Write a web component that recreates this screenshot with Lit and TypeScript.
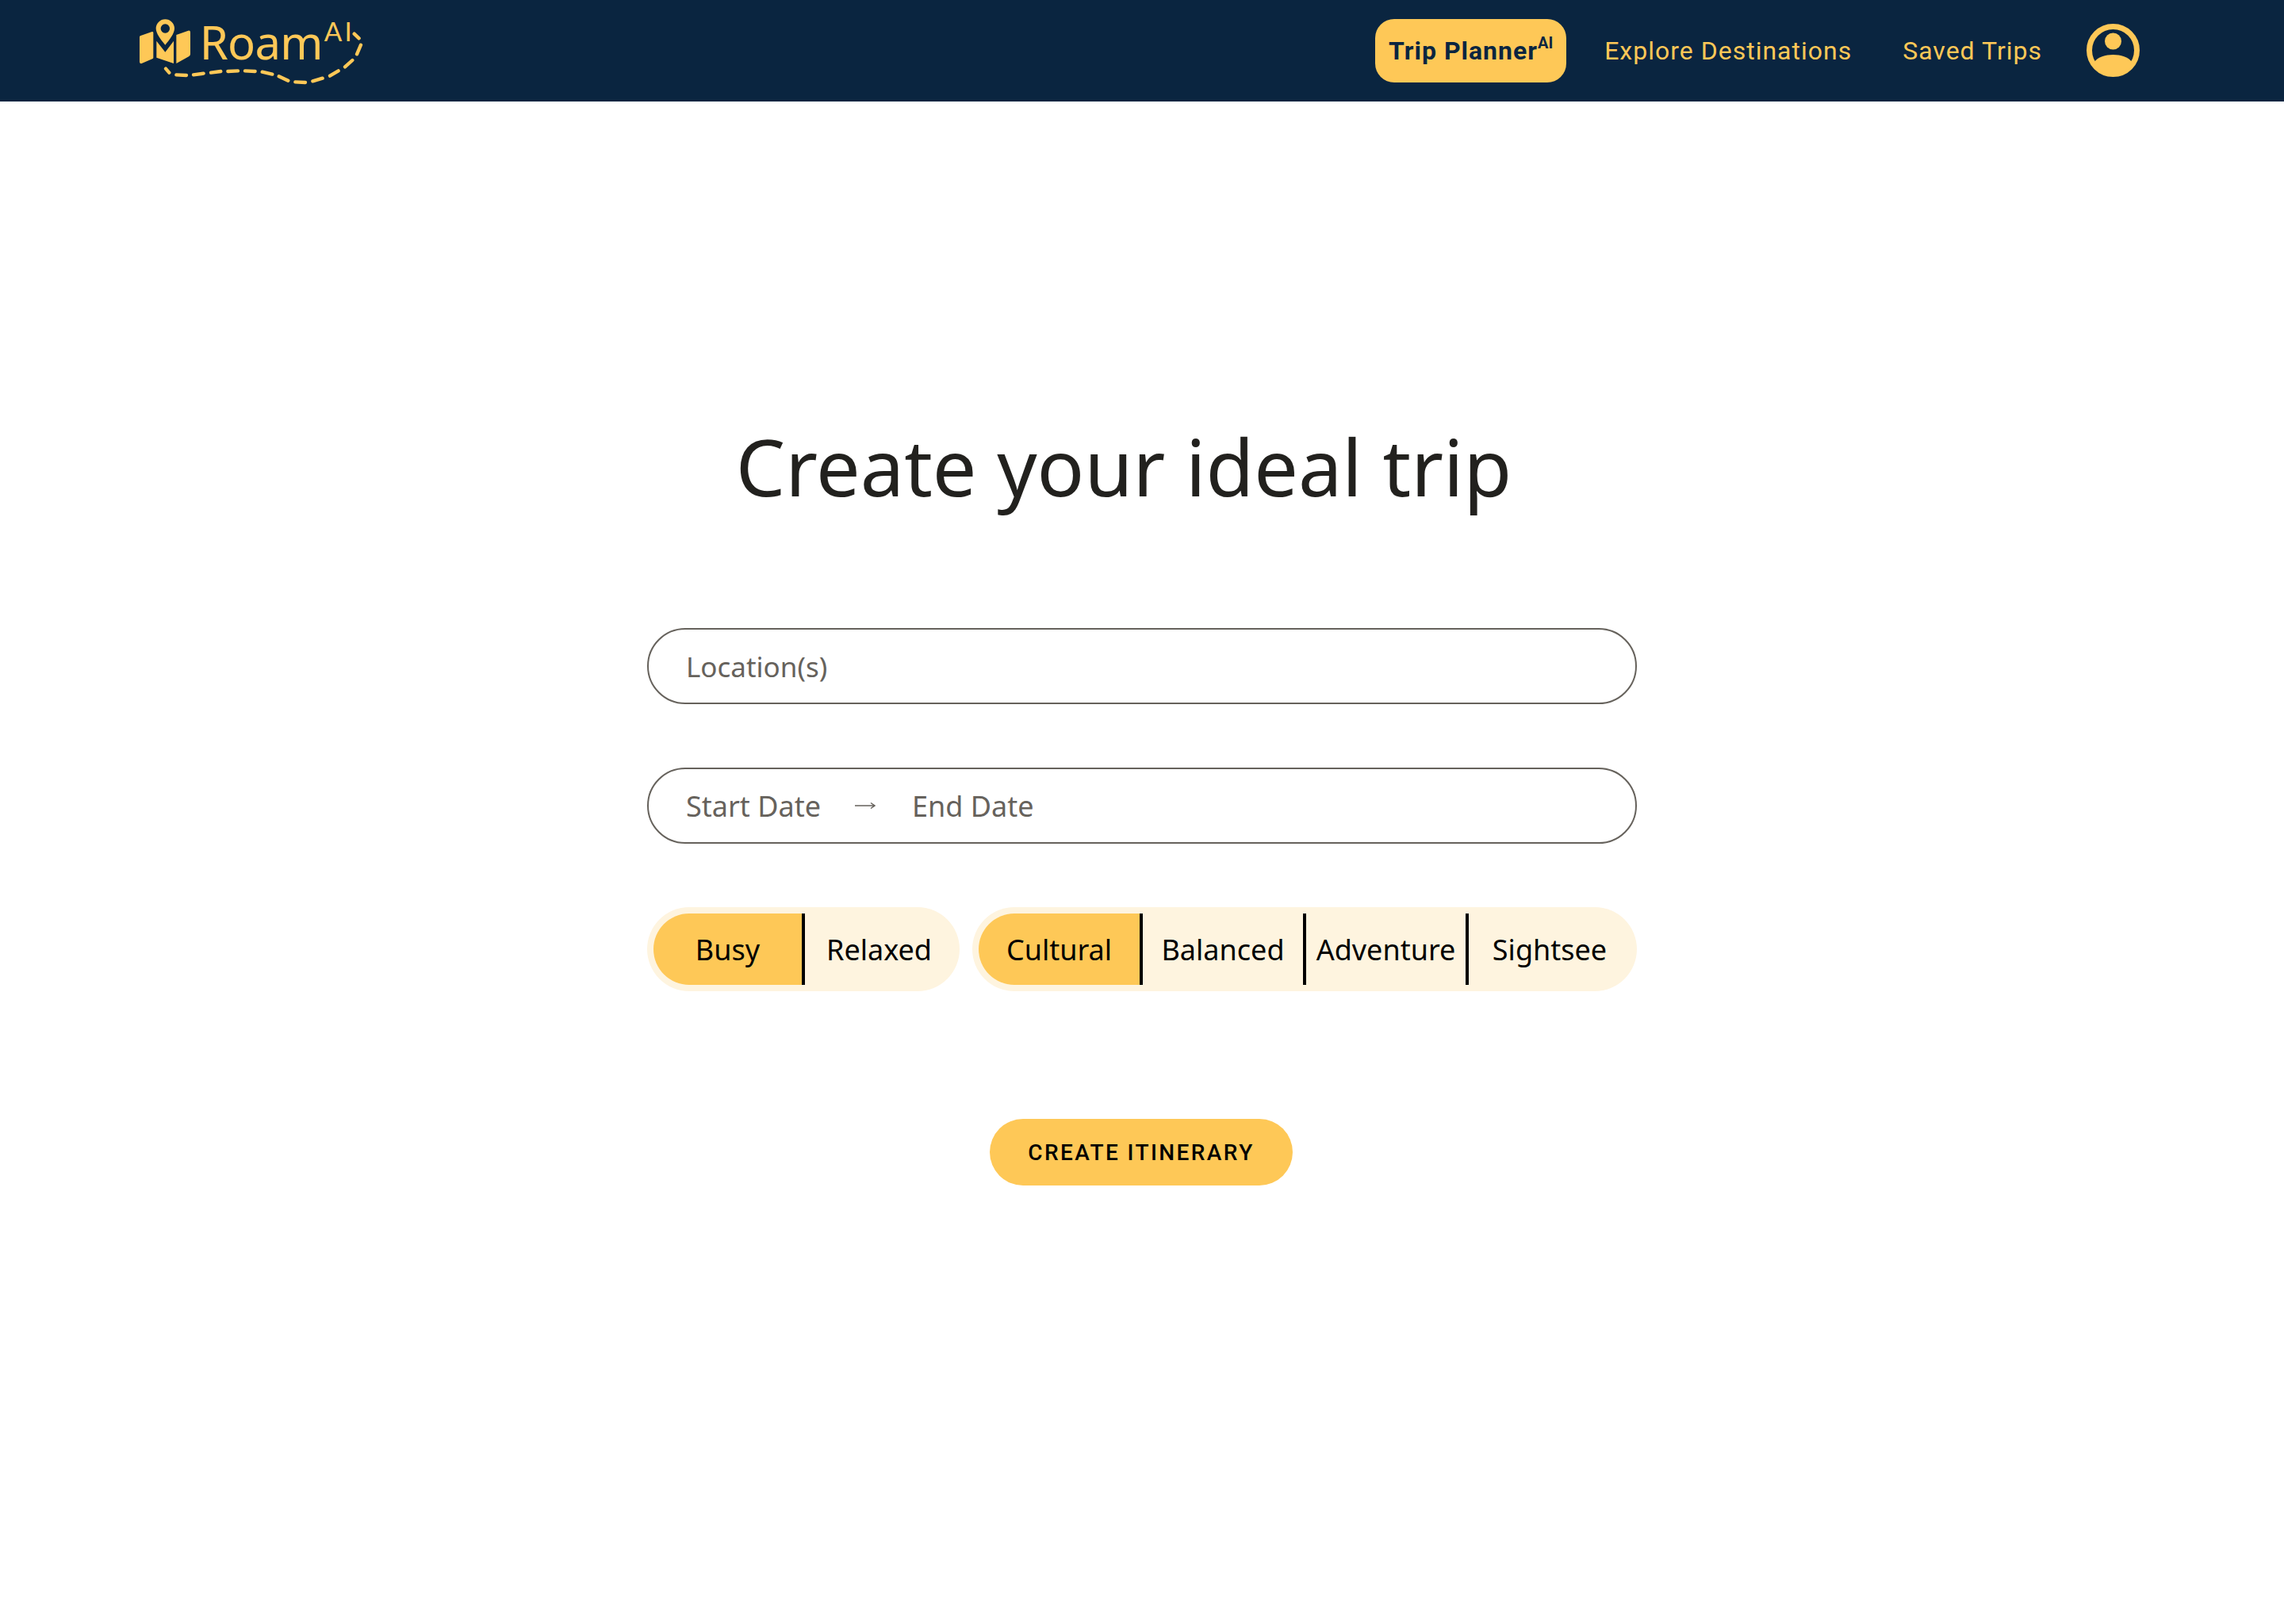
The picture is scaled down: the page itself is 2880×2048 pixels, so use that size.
import { LitElement, html, css, svg } from "lit";
import { customElement } from "lit/decorators.js";

const Y = "#fec857";
const YC = css`#fec857`;

const dashes: [number, number, number, number][] = [
  [207, 260, 220, 275], [247, 283, 285, 285], [312, 283, 350, 278], [378, 275, 415, 270],
  [442, 270, 480, 268], [507, 268, 545, 270], [572, 272, 610, 281], [635, 289, 670, 305],
  [697, 310, 735, 312], [763, 307, 800, 296], [828, 287, 860, 268], [885, 253, 913, 228],
  [930, 205, 945, 170], [920, 128, 938, 145],
];

@customElement("app-root")
export class AppRoot extends LitElement {
  static styles = css`
    :host { display: block; width: 2880px; height: 2048px; background: #fff; font-family: "Noto Sans", sans-serif; overflow: hidden; }
    * { box-sizing: border-box; }
    header { height: 128px; background: #0a2540; display: flex; align-items: center; padding: 0 182px 0 140px; }
    .logo { display: block; width: 340px; height: 127px; align-self: flex-start; }
    .roam { fill: ${YC}; font-family: "Noto Sans", sans-serif; font-size: 174px; letter-spacing: -2px; }
    .ai { fill: ${YC}; font-family: Lato, sans-serif; font-size: 100px; letter-spacing: 10px; }
    nav { margin-left: auto; display: flex; align-items: center; font-family: Roboto, sans-serif; font-size: 32px; letter-spacing: 1px; color: ${YC}; }
    .active { width: 241px; height: 80px; margin-bottom: 1px; border-radius: 24px; background: ${YC}; color: #0a2540; font-weight: 700; display: flex; align-items: center; justify-content: center; margin-right: 48px; }
    sup { font-size: 20px; line-height: 0; letter-spacing: 0; position: relative; top: -2px; vertical-align: super; }
    .saved { margin-left: 64px; margin-right: 56px; }
    .acct { display: block; width: 67px; height: 67px; margin-bottom: 1px; }
    main { display: flex; flex-direction: column; align-items: center; }
    h1 { margin: 370px 46px 0 0; font-size: 98.8px; font-weight: 400; line-height: 180px; color: #22211e; white-space: nowrap; }
    .field { width: 1248px; height: 96px; border: 2px solid #66625c; border-radius: 48px; display: flex; align-items: center; padding-left: 47px; font-size: 36px; color: #66625c; }
    .f1 { margin-top: 114px; font-size: 35px; }
    .f2 { margin-top: 80px; }
    .arrow { display: block; width: 26px; height: 12px; margin: 0 46px 0 43px; }
    .toggles { width: 1248px; margin-top: 80px; display: flex; justify-content: space-between; font-size: 36px; color: #000; }
    .group { display: flex; height: 106px; padding: 8px; border-radius: 53px; background: #fef4df; }
    .seg { display: flex; align-items: center; justify-content: center; border-right: 4px solid #000; white-space: nowrap; }
    .seg:last-child { border-right: 0; }
    .seg.on { background: ${YC}; border-radius: 45px 0 0 45px; }
    .g1 .seg:first-child { width: 191px; } .g1 .seg:last-child { width: 187px; }
    .g2 .seg:nth-child(1) { width: 207px; }
    .g2 .seg:nth-child(2) { width: 206px; }
    .g2 .seg:nth-child(3) { width: 205px; }
    .g2 .seg:nth-child(4) { width: 204px; }
    .cta { margin: 161px 2px 0 0; width: 382px; height: 84px; border-radius: 42px; background: ${YC}; color: #000; display: flex; align-items: center; justify-content: center; font-family: Roboto, sans-serif; font-weight: 500; font-size: 28px; letter-spacing: 2.4px; white-space: nowrap; }
  `;

  render() {
    return html`
      <header>
        <svg class="logo" viewBox="0 0 1020 381">
          <g fill="${Y}">
            <path d="M108 140 Q108 136 112 135 L155 120 Q160 119 160 124 V218 Q160 221 156 223 L116 240 Q108 242 108 234 Z"/>
            <path fill-rule="evenodd" d="M205 73 a35 35 0 0 1 35 35 c0 18 -18 42 -35 62 c-17 -20 -35 -44 -35 -62 a35 35 0 0 1 35 -35 Z M205 91 a17 17 0 1 0 0.01 0 Z"/>
            <path d="M172 155 L205 197 L237 155 V240 L172 218 Z"/>
            <path d="M247 132 L292 116 Q300 114 300 122 V205 Q300 211 294 214 L247 240 Z"/>
          </g>
          <text class="roam" x="335" y="225">Roam</text>
          <text class="ai" x="806" y="157">AI</text>
          <path d="${dashes.map((d) => `M${d[0]} ${d[1]}L${d[2]} ${d[3]}`).join("")}" fill="none" stroke="${Y}" stroke-width="13" stroke-linecap="round"/>
        </svg>
        <nav>
          <div class="active"><span>Trip Planner<sup>AI</sup></span></div>
          <span>Explore Destinations</span>
          <span class="saved">Saved Trips</span>
          <svg class="acct" viewBox="0 0 67 67">
            ${svg`<circle cx="33.5" cy="33.5" r="30" fill="none" stroke="${Y}" stroke-width="7"/>
            <circle cx="33.5" cy="22" r="10.5" fill="${Y}"/>
            <path d="M10 48 C14 42 24 39 33.5 39 C43 39 53 42 57 48 C52 58 43 64 33.5 64 C24 64 15 58 10 48 Z" fill="${Y}"/>`}
          </svg>
        </nav>
      </header>
      <main>
        <h1>Create your ideal trip</h1>
        <div class="field f1">Location(s)</div>
        <div class="field f2">
          <span>Start Date</span>
          <svg class="arrow" viewBox="0 0 26 12"><path d="M0 6H25M20 2.5L25 6L20 9.5" fill="none" stroke="#66625c" stroke-width="1.5"/></svg>
          <span>End Date</span>
        </div>
        <div class="toggles">
          <div class="group g1"><div class="seg on">Busy</div><div class="seg">Relaxed</div></div>
          <div class="group g2"><div class="seg on">Cultural</div><div class="seg">Balanced</div><div class="seg">Adventure</div><div class="seg">Sightsee</div></div>
        </div>
        <div class="cta">CREATE ITINERARY</div>
      </main>
    `;
  }
}
